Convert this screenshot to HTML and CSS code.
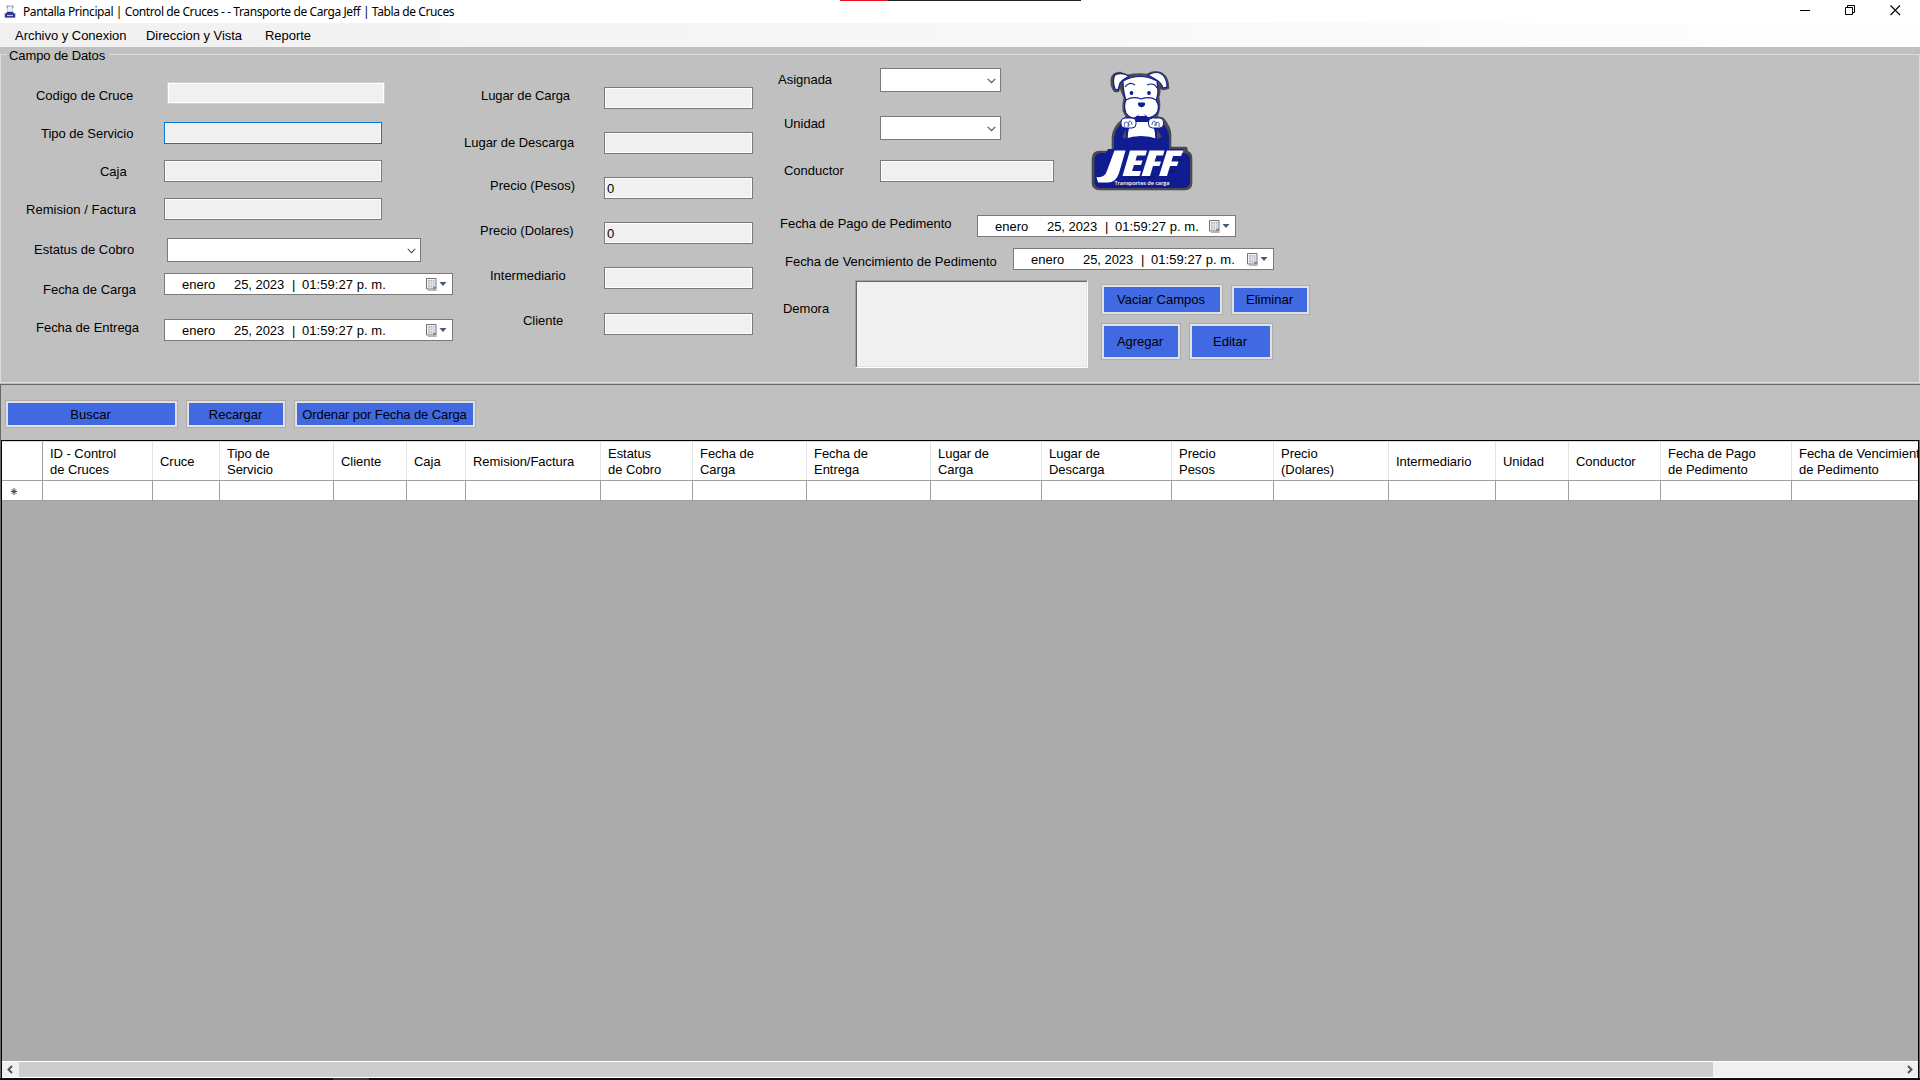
FILE: index.html
```html
<!DOCTYPE html>
<html lang="es">
<head>
<meta charset="utf-8">
<title>Pantalla Principal | Control de Cruces</title>
<link rel="stylesheet" href="styles.css">
</head>
<body>
<svg class="defs" width="0" height="0">
  <symbol id="chevron" viewBox="0 0 9 6"><path d="M.7 .9 4.5 4.7 8.3 .9" fill="none" stroke="#555" stroke-width="1.1"/></symbol>
  <symbol id="calendar" viewBox="0 0 21 13">
    <path d="M2 12.500h8l1.300-1" fill="none" stroke="#b9b4b4"/>
    <path d="M.5.5h9.500v10.500H.5z" fill="#f4f4f6" stroke="#7b6f6f"/>
    <path d="M2 2h6.500v7.500H2z" fill="#b4bcc9"/>
    <path d="M2 4.300h6.500M2 6.700h6.500M4.300 2v7.500M6.500 2v7.500" stroke="#e9edf3" stroke-width=".8"/>
    <path d="M7.500 11.500V9h3z" fill="#7b6f6f"/>
    <path d="M13.500 4h7L17 8z" fill="#42597f"/>
  </symbol>
</svg>
<div class="window">
  <header class="titlebar">
    <svg class="app-icon" viewBox="0 0 12 13"><path d="M2.500.5h7v2l-1 1v3l1.500 1.500H11.500v4.500H.5V8H2l1.500-1.500v-3l-1-1z" fill="#9a9cc4"/><path d="M4 1.500h4V6.500H4z" fill="#f0f0f8"/><path d="M3.500 7h5L11 9.500v3H1v-3z" fill="#2a3198"/><path d="M3 10.500h6" stroke="#c4c4e6" stroke-width="1.200"/></svg>
    <span class="title">Pantalla Principal | Control de Cruces - - Transporte de Carga Jeff | Tabla de Cruces</span>
    <div class="window-buttons">
      <svg viewBox="0 0 11 11"><path d="M0 5.500h10" stroke="#000"/></svg>
      <svg viewBox="0 0 11 11"><path d="M.5 2.500h7v7h-7zM2.500 2.500v-2h7v7h-2" fill="none" stroke="#000"/></svg>
      <svg viewBox="0 0 11 11"><path d="M.5.5l9.500 9.500M10 .5.5 10" stroke="#000" stroke-width="1.100"/></svg>
    </div>
    <div class="top-strip"></div>
  </header>
  <nav class="menubar"><span class="m1">Archivo y Conexion</span><span class="m2">Direccion y Vista</span><span class="m3">Reporte</span></nav>

  <section class="form-panel">
    <fieldset class="group">
      <legend>Campo de Datos</legend>
      <div class="columns">
        <div class="col-a">
          <div class="row r-codigo"><label>Codigo de Cruce</label><div class="box flat"></div></div>
          <div class="row r-tipo"><label>Tipo de Servicio</label><div class="box focus"></div></div>
          <div class="row r-caja"><label>Caja</label><div class="box"></div></div>
          <div class="row r-remision"><label>Remision / Factura</label><div class="box"></div></div>
          <div class="row r-estatus"><label>Estatus de Cobro</label><div class="combo"><svg><use href="#chevron"/></svg></div></div>
          <div class="row r-fcarga"><label>Fecha de Carga</label><div class="date"><span class="month">enero</span><span class="day">25, 2023</span><span class="bar">|</span><span class="time">01:59:27 p. m.</span><svg><use href="#calendar"/></svg></div></div>
          <div class="row r-fentrega"><label>Fecha de Entrega</label><div class="date"><span class="month">enero</span><span class="day">25, 2023</span><span class="bar">|</span><span class="time">01:59:27 p. m.</span><svg><use href="#calendar"/></svg></div></div>
        </div>
        <div class="col-b">
          <div class="row r-lcarga"><label>Lugar de Carga</label><div class="box"></div></div>
          <div class="row r-ldescarga"><label>Lugar de Descarga</label><div class="box"></div></div>
          <div class="row r-pesos"><label>Precio (Pesos)</label><div class="box">0</div></div>
          <div class="row r-dolares"><label>Precio (Dolares)</label><div class="box">0</div></div>
          <div class="row r-inter"><label>Intermediario</label><div class="box"></div></div>
          <div class="row r-cliente"><label>Cliente</label><div class="box"></div></div>
        </div>
        <div class="col-c">
          <div class="upper">
            <div class="assign">
              <div class="row r-asignada"><label>Asignada</label><div class="combo"><svg><use href="#chevron"/></svg></div></div>
              <div class="row r-unidad"><label>Unidad</label><div class="combo"><svg><use href="#chevron"/></svg></div></div>
              <div class="row r-conductor"><label>Conductor</label><div class="box"></div></div>
            </div>
            <svg class="logo" viewBox="22 14 103 123">
              <path d="M43 24Q44 18 51 18L58 21Q68 19 78 20Q86 15 93 19Q99 23 99 33L94 34L90 31Q91 37 89 42Q91 50 89 57L87 62L94 64Q101 72 101 80V93H117L118 97Q122 98 122 103V128Q122 134 116 134H31Q24 134 24 128V104Q24 97 31 97H44V82Q45 72 53 66L58 62L55 56Q54 49 56 43L53 36L51 29L49 36L46 36Q42 31 43 24Z" fill="#4a4a50" stroke="#4a4a50" stroke-width="2.600" stroke-linejoin="round"/>
              <path d="M45 97V84Q46 72 56 66H91Q100 73 100 84V97z" fill="#101c92"/>
              <rect x="25.500" y="98" width="95.500" height="35" rx="6" fill="#101c92"/>
              <path d="M39 94h76l-3 6H36z" fill="#101c92"/>
              <g fill="#fff" stroke="#101c92" stroke-width="1.200" stroke-linejoin="round">
                <path d="M54 26Q71 17 88 26L89 37Q88 42 87 48H58Q54 38 54 26z"/>
                <path d="M60 21Q52 17 46 20Q43 25 46 34L49 35L51 28Q53 25 57 23z"/>
                <path d="M79 20Q88 15 94 20Q98 25 98 32L94 33Q92 27 86 24z"/>
                <path d="M64 64h17q6 8 6 20H58q0-12 6-20z"/>
                <path d="M57 45Q64 41 72 44Q81 41 87 45Q92 53 87 59Q83 63 78 63H66Q60 63 57 58Q54 51 57 45z"/>
              </g>
              <path d="M55 84q17-6 34 0l7 1v12H49V85z" fill="#101c92"/>
              <path d="M56 32q4-6 10-2M78 30q7-3 10 3" fill="none" stroke="#101c92" stroke-width="1.200"/>
              <circle cx="62.500" cy="38" r="1.900" fill="#101c92"/><circle cx="80" cy="38" r="1.900" fill="#101c92"/>
              <path d="M69.500 48h6q1 3-3 4-4-1-3-4z" fill="#101c92" stroke="#101c92"/>
              <path d="M66 62q7-6 13 0l3 5H63z" fill="#101c92"/><path d="M68.500 61q4-5 8 0z" fill="#fff"/>
              <path d="M57 74l-4 8 4 2zM88 74l5 8-5 2z" fill="#4a4a50"/>
              <g fill="#fff" stroke="#101c92"><rect x="52" y="63" width="15" height="10" rx="4"/><rect x="79.500" y="63" width="15" height="10" rx="4"/></g>
              <path d="M56 72q-2-5 1-5t2 5m1-1q-1-5 1-5t2 4M83 70q0-4 2-4t1 5m1 0q0-5 2-4t1 5" fill="none" stroke="#101c92" stroke-width=".7"/>
              <path d="M46 127.500h14M60 122.500h12M78 122.500h8M98 116.500h8M109 105h4" stroke="#171936" stroke-width="1.300"/>
              <path d="M45.500 95.500h11l-6.500 22.500q-3 10-12 9.500h-9l-1.500-5.500q8 1 10-5z" fill="#fff"/>
              <g fill="#fff"><path d="M61 95.500h17l-1.500 5H68l-1.500 5h7l-1.500 4.500h-7l-2 6h9l-1.500 5H53.500z"/><path d="M80.500 95.500h15l-1.500 5h-6.500l-2 6h6.500l-1.500 4.500h-6.500l-3 10H72.500z"/><path d="M98 95.500h16.500l-2.500 5.500h-8l-1.500 5.500h7l-1.500 4.500h-7l-3 10H90z"/></g>
              <text x="45.500" y="129.500" textLength="55" font-size="5.600">Transportes de carga</text>
            </svg>
          </div>
          <div class="row r-pago"><label>Fecha de Pago de Pedimento</label><div class="date"><span class="month">enero</span><span class="day">25, 2023</span><span class="bar">|</span><span class="time">01:59:27 p. m.</span><svg><use href="#calendar"/></svg></div></div>
          <div class="row r-venc"><label>Fecha de Vencimiento de Pedimento</label><div class="date"><span class="month">enero</span><span class="day">25, 2023</span><span class="bar">|</span><span class="time">01:59:27 p. m.</span><svg><use href="#calendar"/></svg></div></div>
          <div class="row r-demora">
            <label>Demora</label><div class="memo"></div>
            <div class="actions">
              <div class="pair"><button class="btn b-vaciar">Vaciar Campos</button><button class="btn b-eliminar">Eliminar</button></div>
              <div class="pair"><button class="btn b-agregar">Agregar</button><button class="btn b-editar">Editar</button></div>
            </div>
          </div>
        </div>
      </div>
    </fieldset>
  </section>

  <section class="toolbar">
    <button class="btn b-buscar">Buscar</button><button class="btn b-recargar">Recargar</button><button class="btn b-ordenar">Ordenar por Fecha de Carga</button>
  </section>

  <section class="data">
    <div class="grid head">
      <div></div><div>ID - Control<br>de Cruces</div><div>Cruce</div><div>Tipo de<br>Servicio</div><div>Cliente</div><div>Caja</div><div>Remision/Factura</div><div>Estatus<br>de Cobro</div><div>Fecha de<br>Carga</div><div>Fecha de<br>Entrega</div><div>Lugar de<br>Carga</div><div>Lugar de<br>Descarga</div><div>Precio<br>Pesos</div><div>Precio<br>(Dolares)</div><div>Intermediario</div><div>Unidad</div><div>Conductor</div><div>Fecha de Pago<br>de Pedimento</div><div>Fecha de Vencimiento<br>de Pedimento</div>
    </div>
    <div class="grid new-row">
      <div><svg viewBox="0 0 6 7"><path d="M3 0v7M0 3.500h6M.8 1.200l4.400 4.600M5.200 1.200.8 5.800" stroke="#444" stroke-width="1"/></svg></div><div></div><div></div><div></div><div></div><div></div><div></div><div></div><div></div><div></div><div></div><div></div><div></div><div></div><div></div><div></div><div></div><div></div><div></div>
    </div>
    <div class="empty"></div>
    <div class="scroll">
      <svg viewBox="0 0 17 15"><path d="M10 4 6.500 7.500l3.500 3.500" fill="none" stroke="#555" stroke-width="2"/></svg>
      <div class="thumb"></div>
      <svg class="next" viewBox="0 0 17 15"><path d="M7 4l3.500 3.500L7 11" fill="none" stroke="#555" stroke-width="2"/></svg>
    </div>
  </section>
  <footer class="edge"><div></div></footer>
</div>
</body>
</html>
```
FILE: styles.css
```css
* { box-sizing: border-box; }
html, body { margin: 0; width: 1920px; height: 1080px; overflow: hidden; }
body { font: 13px/16px "Liberation Sans", Arial, sans-serif; color: #000; background: #c0c0c0; }
.defs { display: block; position: absolute; }
.window { width: 1920px; height: 1080px; display: flex; flex-direction: column; white-space: nowrap; }

/* title bar */
.titlebar { position: relative; height: 23px; background: #fff; display: flex; align-items: center; padding: 0 19px 0 4px; flex: none; }
.app-icon { width: 12px; height: 13px; margin: 0 7px 1px 0; }
.title { font: 12px/16px "Noto Sans", sans-serif; letter-spacing: -0.4px; padding-top: 1px; }
.window-buttons { margin-left: auto; display: flex; gap: 34px; padding-bottom: 3px; }
.window-buttons svg { width: 11px; height: 11px; }
.top-strip { position: absolute; left: 840px; top: 0; width: 241px; height: 1px; background: linear-gradient(90deg, #e81123 48px, #222 48px); }

.menubar { height: 24px; flex: none; display: flex; align-items: center; padding: 1px 0 0 15px; letter-spacing: -0.03px; background: linear-gradient(90deg, #f0f0f0, #fdfdfd 90%); }
.menubar .m1 { width: 131px; }
.menubar .m2 { width: 119px; }

/* data entry group */
.form-panel { height: 337px; flex: none; padding-top: 1px; }
.group { margin: 0; padding: 0; border: 1px solid #dcdcdc; height: 335px; min-width: 0; }
legend { margin-left: 6px; padding: 0 3px 0 2px; height: 13px; line-height: 15px; width: 102px; letter-spacing: -0.1px; }
.columns { display: flex; align-items: flex-start; }
.col-a { width: 459px; padding-top: 21px; }
.col-b { width: 310px; padding-top: 26px; }
.col-c { width: 560px; padding-top: 7px; }
.row { display: flex; align-items: flex-start; }
.row label { flex: none; padding-left: 1px; letter-spacing: -0.02px; }

.box, .combo, .date { height: 22px; border: 1px solid #7a7a7a; background: #fff; flex: none; }
.box { background: #f0f0f0; box-shadow: inset 0 0 0 1px #fff; padding: 3px 2px; width: 149px; }
.box.focus { border-color: #0078d7; }
.box.flat { border-color: #d0d0d0; }
.col-a .box { width: 218px; }
.combo { height: 24px; display: flex; justify-content: flex-end; align-items: center; padding-right: 4px; }
.combo svg { width: 9px; height: 6px; margin-top: 2px; }
.date { display: flex; padding: 3px 5px 0 17px; width: 289px; }
.date .month { width: 52px; }
.date .day { width: 58px; letter-spacing: -0.05px; }
.date .bar { width: 10px; }
.date .time { letter-spacing: 0.05px; }
.date svg { width: 21px; height: 13px; margin: 1px 0 0 auto; }

.r-codigo label { margin: 6px 0 0 34px; width: 132px; }
.r-codigo { height: 40px; }
.r-tipo { height: 38px; }
.r-tipo label { margin: 4px 0 0 39px; width: 124px; }
.r-caja { height: 38px; }
.r-caja label { margin: 4px 0 0 98px; width: 65px; }
.r-remision { height: 40px; }
.r-remision label { margin: 4px 0 0 24px; width: 139px; letter-spacing: 0.05px; }
.r-estatus { height: 35px; }
.r-estatus label { margin: 4px 0 0 32px; width: 134px; }
.r-estatus .combo { width: 254px; }
.r-fcarga { height: 46px; }
.r-fcarga label { margin: 9px 0 0 41px; width: 122px; }
.r-fentrega label { margin: 1px 0 0 34px; width: 129px; }

.col-b .row { height: 45px; }
.col-b .r-inter { height: 46px; }
.r-lcarga label { margin: 1px 0 0 20px; width: 124px; letter-spacing: -0.1px; }
.r-ldescarga label { margin: 3px 0 0 3px; width: 141px; }
.r-pesos label { margin: 1px 0 0 29px; width: 115px; }
.r-dolares label { margin: 1px 0 0 19px; width: 125px; }
.r-inter label { margin: 1px 0 0 29px; width: 115px; }
.r-cliente label { margin: 0 0 0 62px; width: 82px; }

.upper { display: flex; height: 147px; }
.assign { width: 321px; }
.logo { width: 103px; height: 123px; margin-top: 1px; }
.logo text { fill: #fff; font-family: "Open Sans", sans-serif; font-weight: 600; }
.assign .combo { width: 121px; }
.r-asignada { height: 48px; }
.r-asignada label { margin: 4px 0 0 7px; width: 103px; }
.r-unidad { height: 44px; }
.r-unidad label { margin: 0 0 0 13px; width: 97px; }
.r-conductor label { margin: 3px 0 0 13px; width: 97px; }
.r-conductor .box { width: 174px; }
.r-pago { height: 33px; }
.r-pago label { margin: 1px 0 0 9px; width: 198px; }
.r-pago .date { width: 259px; }
.r-venc { height: 32px; }
.r-venc label { margin: 6px 0 0 14px; width: 229px; }
.r-venc .date { width: 261px; }
.r-demora label { margin: 21px 0 0 12px; width: 73px; }
.memo { width: 233px; height: 88px; flex: none; background: #f0f0f0; border: 1px solid; border-color: #a0a0a0 #fff #fff #a0a0a0; box-shadow: inset 1px 1px #696969, inset -1px -1px #e3e3e3; }

.btn { font: inherit; color: #000; background: #4169e1; border: 1px solid #adadad; box-shadow: inset 0 0 0 2px #e1e1e1; padding: 0; margin: 0; flex: none; }
.actions { padding: 4px 0 0 13px; display: flex; flex-direction: column; gap: 8px; }
.pair { display: flex; gap: 8px; align-items: flex-end; }
.b-vaciar { width: 122px; height: 31px; padding-right: 2px; }
.b-eliminar { width: 79px; height: 30px; padding-right: 2px; }
.b-agregar { width: 80px; height: 37px; padding-right: 2px; }
.b-editar { width: 84px; height: 37px; padding-right: 2px; }

/* search bar */
.toolbar { height: 56px; flex: none; border: solid #696969; border-width: 1px 0 0 1px; padding: 15px 0 0 4px; display: flex; gap: 8px; align-items: flex-start; }
.toolbar .btn { height: 28px; padding-top: 2px; }
.b-buscar { width: 173px; padding-right: 2px; }
.b-recargar { width: 100px; padding-right: 1px; }
.b-ordenar { width: 182px; padding-right: 1px; letter-spacing: -0.1px; }

/* table */
.data { height: 638px; flex: none; margin-right: 1px; border: solid #000; border-width: 1px 1px 0 1px; outline: 1px solid #696969; outline-offset: 0; clip-path: inset(0 -1px 0 -1px); margin-left: 1px; display: flex; flex-direction: column; background: #ababab; overflow: hidden; }
.grid { display: grid; grid-template-columns: 41px 110px 67px 114px 73px 59px 135px 92px 114px 124px 111px 130px 102px 115px 107px 73px 92px 131px 126px; flex: none; }
.head { height: 40px; border-top: 1px solid #dadada; border-bottom: 1px solid #a0a0a0; background: #fff; }
.head > div { border-right: 1px solid #e3e3e3; padding: 2px 0 0 7px; display: flex; align-items: center; overflow: hidden; letter-spacing: -0.04px; }
.head > div:first-child { border-right-color: #a0a0a0; }
.new-row { height: 20px; background: #fff; border-bottom: 1px solid #a0a0a0; }
.new-row > div { border-right: 1px solid #a0a0a0; display: flex; align-items: center; padding-left: 9px; }
.grid > div:last-child { border-right: 0; }
.new-row svg { width: 6px; height: 7px; margin-top: 2px; }
.empty { flex: 1; }
.scroll { height: 17px; flex: none; background: #f0f0f0; border: solid #fff; border-width: 1px 0; display: flex; }
.scroll svg { width: 17px; height: 15px; }
.thumb { width: 1694px; background: #cdcdcd; }
.scroll .next { margin-left: auto; }
.edge { height: 2px; flex: none; background: #0c0c0c; padding-left: 333px; }
.edge div { width: 36px; height: 2px; background: #333; }
```
